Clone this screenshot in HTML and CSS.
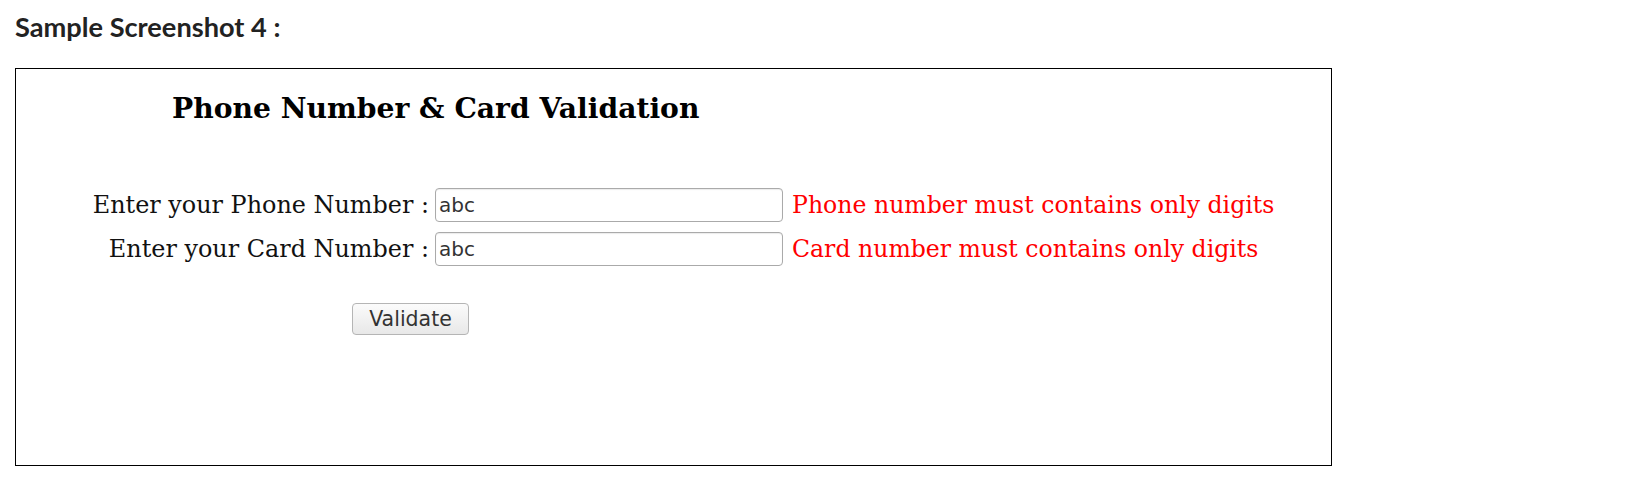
FILE: index.html
```html
<!DOCTYPE html>
<html>
<head>
<meta charset="utf-8">
<link rel="stylesheet" href="styles.css">
</head>
<body>
<h3 class="caption">Sample Screenshot 4 :</h3>
<div class="frame">
  <h2 class="title">Phone Number &amp; Card Validation</h2>
  <form class="form">
    <div class="row">
      <label class="label">Enter your Phone Number :</label>
      <input class="field" type="text" value="abc">
      <span class="error">Phone number must contains only digits</span>
    </div>
    <div class="row">
      <label class="label">Enter your Card Number :</label>
      <input class="field" type="text" value="abc">
      <span class="error">Card number must contains only digits</span>
    </div>
    <div class="actions">
      <button class="btn" type="button">Validate</button>
    </div>
  </form>
</div>
</body>
</html>
```
FILE: styles.css
```css
html, body {
  margin: 0;
  padding: 0;
  background: #fff;
}
body {
  padding: 0 0 0 15px;
}
.caption {
  font-family: "Lato", sans-serif;
  font-weight: 700;
  font-size: 27.2px;
  color: #222;
  margin: 0;
  padding-top: 10px;
  line-height: 34px;
  height: 58px;
}
.frame {
  width: 1315px;
  height: 396px;
  border: 1px solid #000;
  font-family: "DejaVu Serif", serif;
}
.title {
  margin: 0;
  padding: 23px 0 0 156px;
  font-size: 28.2px;
  font-weight: 700;
  line-height: 34px;
  color: #000;
}
.form {
  padding-top: 57px;
}
.row {
  display: flex;
  align-items: center;
  height: 44px;
}
.label {
  width: 413px;
  text-align: right;
  font-size: 23.9px;
  color: #111;
  padding-right: 6px;
}
.field {
  box-sizing: border-box;
  width: 348px;
  height: 34px;
  border: 1px solid #aaa;
  border-radius: 4px;
  padding: 0 3px;
  margin: 0;
  font-family: "DejaVu Sans", sans-serif;
  font-size: 20px;
  color: #333;
  box-shadow: inset 0 1px 1px rgba(0,0,0,0.08);
}
.error {
  color: #ff0000;
  font-size: 23.6px;
  padding-left: 9px;
}
.actions {
  padding: 32px 0 0 336px;
}
.btn {
  width: 117px;
  height: 32px;
  border: 1px solid #b5b5b5;
  border-radius: 4px;
  background: linear-gradient(#fbfbfb, #e8e8e8);
  font-family: "DejaVu Sans", sans-serif;
  font-size: 20.5px;
  color: #333;
  padding: 0;
}
```
